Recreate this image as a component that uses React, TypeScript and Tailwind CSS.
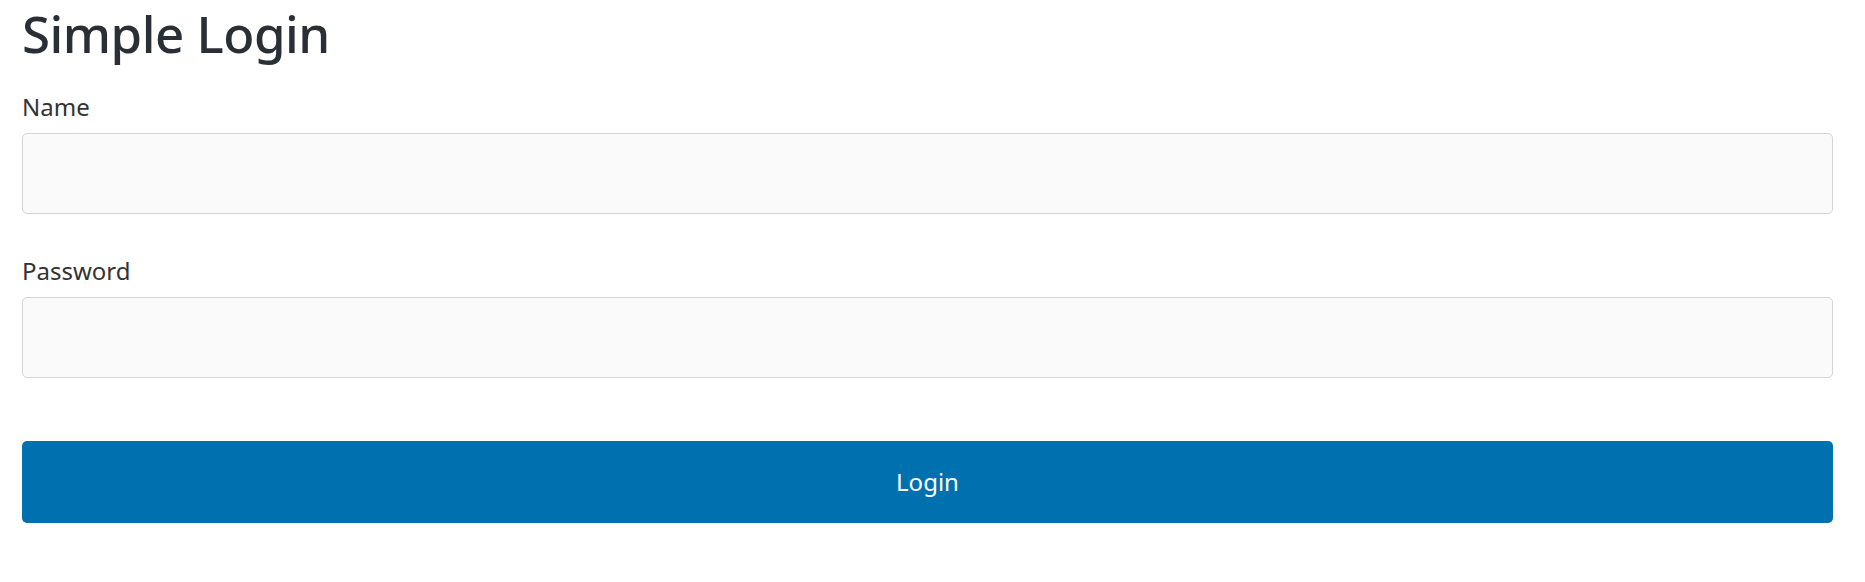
import React from "react";

export default function App() {
  return (
    <div className="min-h-screen bg-white pl-[22px] pr-[32px]" style={{ fontFamily: '"Noto Sans", "Open Sans", sans-serif' }}>
      <h1 className="text-[51px] leading-[66px] text-[#2a2e35] font-medium tracking-[-0.5px]">Simple Login</h1>
      <div className="mt-[26px]">
        <label className="block text-[24px] leading-[30px] text-[#333333]">Name</label>
        <input className="mt-[11px] block h-[81px] w-full rounded-[5px] border border-[#d4d4d4] bg-[#fafafa] outline-none" />
      </div>
      <div className="mt-[42px]">
        <label className="block text-[24px] leading-[30px] text-[#333333]">Password</label>
        <input type="password" className="mt-[11px] block h-[81px] w-full rounded-[5px] border border-[#d4d4d4] bg-[#fafafa] outline-none" />
      </div>
      <button className="mt-[63px] flex h-[82px] w-full items-center justify-center rounded-[5px] bg-[#0170af] text-[24px] text-white">
        Login
      </button>
    </div>
  );
}
